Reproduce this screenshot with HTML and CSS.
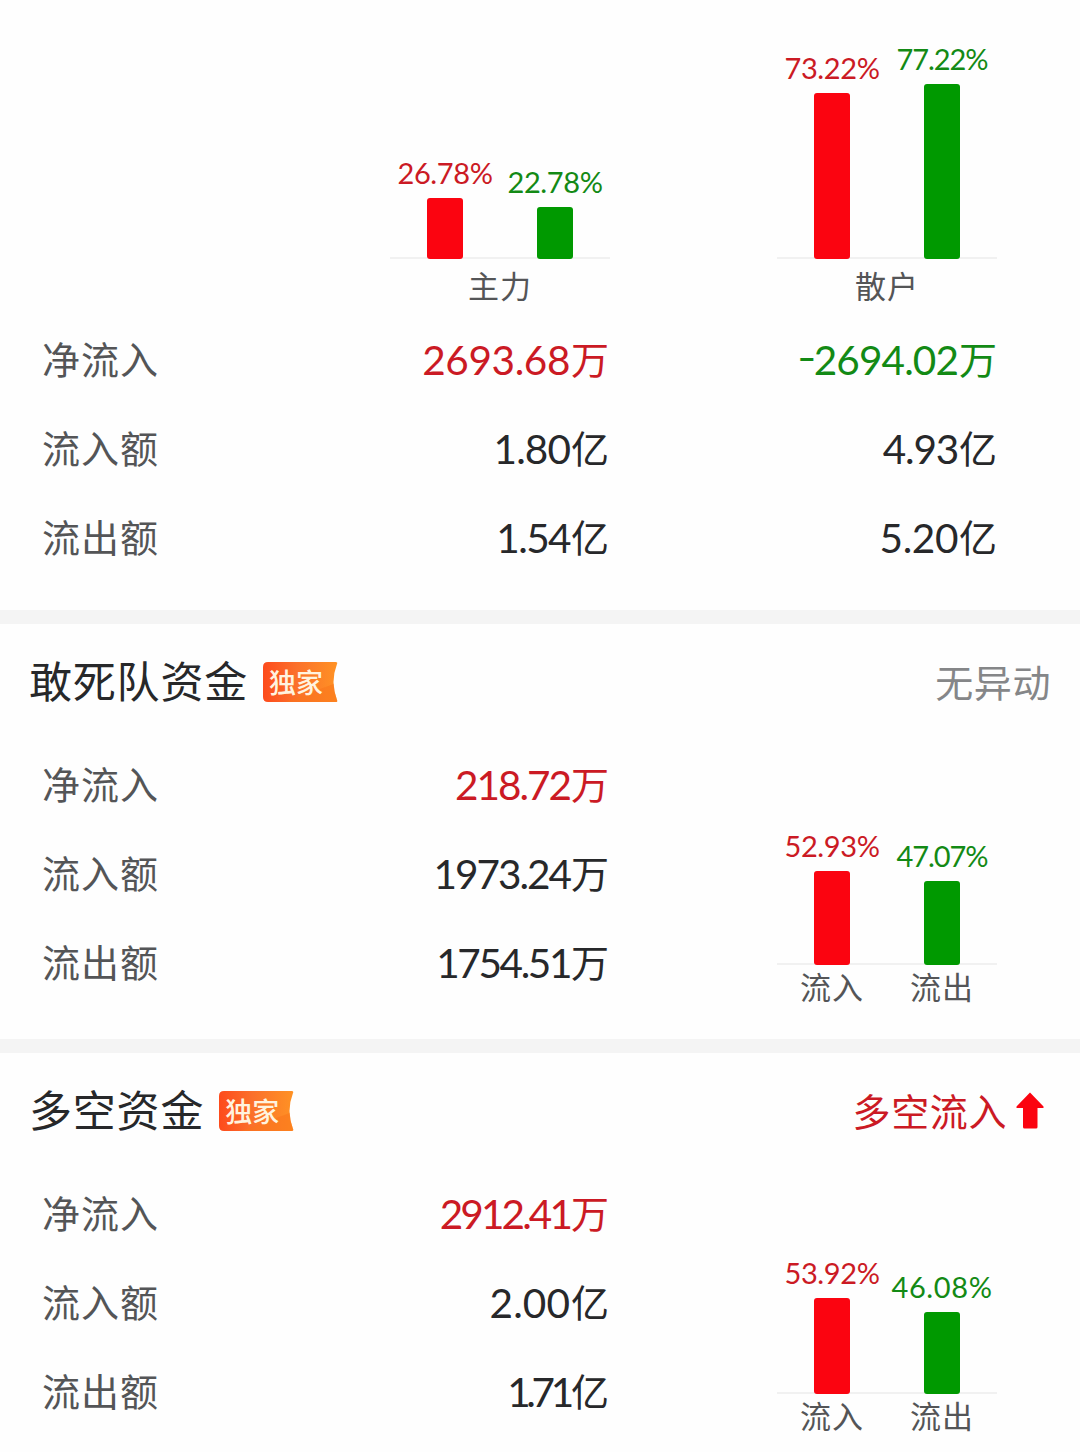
FILE: index.html
```html
<!DOCTYPE html>
<html lang="zh-CN">
<head>
<meta charset="utf-8">
<title>资金流向</title>
<link rel="stylesheet" href="styles.css">
</head>
<body>
<main class="page">
  <section class="overview">
    <div class="overview-charts">
      <div class="chart">
        <div class="bars">
          <div class="col"><span class="pct up">26.78%</span><i class="bar in" style="height:61px"></i></div>
          <div class="col"><span class="pct down">22.78%</span><i class="bar out" style="height:52px"></i></div>
        </div>
        <div class="captions"><span>主力</span></div>
      </div>
      <div class="chart">
        <div class="bars">
          <div class="col"><span class="pct up">73.22%</span><i class="bar in" style="height:166px"></i></div>
          <div class="col"><span class="pct down narrow">77.22%</span><i class="bar out" style="height:175px"></i></div>
        </div>
        <div class="captions"><span>散户</span></div>
      </div>
    </div>
    <div class="row"><span class="label">净流入</span><span class="value up"><b class="t1">2693.68</b>万</span><span class="value down"><b class="t2"><em>-</em>2694.02</b>万</span></div>
    <div class="row"><span class="label">流入额</span><span class="value"><b class="t2">1.80</b>亿</span><span class="value"><b class="t3">4.93</b>亿</span></div>
    <div class="row"><span class="label">流出额</span><span class="value"><b class="t4">1.54</b>亿</span><span class="value"><b class="t1">5.20</b>亿</span></div>
  </section>

  <section class="panel">
    <header class="head">
      <h2>敢死队资金</h2>
      <span class="tag"><svg class="tag-bg" viewBox="0 0 75 40"><defs><linearGradient id="g1"><stop offset="0" stop-color="#fd4b1c"/><stop offset=".45" stop-color="#fb702b"/><stop offset="1" stop-color="#ff9224"/></linearGradient></defs><path d="M5 0H72.500Q75 0 74 2Q67 20 74 38Q75 40 72.500 40H5Q0 40 0 35V5Q0 0 5 0Z" fill="url(#g1)"/><path d="M22 40L70.600 22Q71.500 31 74 38Q75 40 72.500 40Z" fill="#f9751c" opacity=".55"/></svg><span>独家</span></span>
      <span class="status">无异动</span>
    </header>
    <div class="body">
      <div class="rows">
        <div class="row"><span class="label">净流入</span><span class="value up"><b class="t5">218.72</b>万</span></div>
        <div class="row"><span class="label">流入额</span><span class="value"><b class="t5">1973.24</b>万</span></div>
        <div class="row"><span class="label">流出额</span><span class="value"><b class="t6">1754.51</b>万</span></div>
      </div>
      <div class="chart">
        <div class="bars">
          <div class="col"><span class="pct up">52.93%</span><i class="bar in" style="height:94px"></i></div>
          <div class="col"><span class="pct down narrow">47.07%</span><i class="bar out" style="height:84px"></i></div>
        </div>
        <div class="captions"><span>流入</span><span>流出</span></div>
      </div>
    </div>
  </section>

  <section class="panel">
    <header class="head">
      <h2>多空资金</h2>
      <span class="tag"><svg class="tag-bg" viewBox="0 0 75 40"><path d="M5 0H72.500Q75 0 74 2Q67 20 74 38Q75 40 72.500 40H5Q0 40 0 35V5Q0 0 5 0Z" fill="url(#g1)"/><path d="M22 40L70.600 22Q71.500 31 74 38Q75 40 72.500 40Z" fill="#f9751c" opacity=".55"/></svg><span>独家</span></span>
      <span class="status up">多空流入<svg class="arrow" viewBox="0 0 28 37"><path d="M14 .5L27.500 14.500V16H21.500V35Q21.500 36.500 20 36.500H8.500Q7 36.500 7 35V16H.5V14.500Z" fill="#fb0410"/></svg></span>
    </header>
    <div class="body">
      <div class="rows">
        <div class="row"><span class="label">净流入</span><span class="value up"><b class="t7">2912.41</b>万</span></div>
        <div class="row"><span class="label">流入额</span><span class="value"><b class="t0">2.00</b>亿</span></div>
        <div class="row"><span class="label">流出额</span><span class="value"><b class="t8">1.71</b>亿</span></div>
      </div>
      <div class="chart">
        <div class="bars">
          <div class="col"><span class="pct up">53.92%</span><i class="bar in" style="height:96px"></i></div>
          <div class="col"><span class="pct down wide">46.08%</span><i class="bar out" style="height:82px"></i></div>
        </div>
        <div class="captions"><span>流入</span><span>流出</span></div>
      </div>
    </div>
  </section>
</main>
</body>
</html>
```
FILE: styles.css
```css
* { box-sizing: border-box; }
body {
  margin: 0;
  background: #fefefe;
  color: #27282a;
  font-family: Lato, "Noto Sans CJK SC", sans-serif;
}
.page { width: 1080px; height: 1452px; overflow: hidden; }
.overview { height: 610px; }
.overview-charts {
  display: flex;
  gap: 167px;
  padding-left: 390px;
  height: 314px;
  align-items: flex-end;
}
.overview-charts .chart { margin-bottom: 9px; }

.chart { width: 220px; flex: none; }
.bars {
  display: flex;
  align-items: flex-end;
  background: linear-gradient(#f1f1f1, #f1f1f1) 0 100% / 100% 2px no-repeat;
}
.col { width: 110px; display: flex; flex-direction: column; align-items: center; }
.pct {
  font-size: 29px;
  line-height: 30px;
  margin-bottom: 10px;
  letter-spacing: -.4px;
  white-space: nowrap;
}
.pct.narrow { letter-spacing: -1.100px; }
.pct.wide { letter-spacing: .6px; }
.bar { width: 36px; border-radius: 3px; }
.in { background: #fb0410; }
.out { background: #009900; }
.captions {
  display: flex;
  justify-content: space-around;
  height: 46px;
  line-height: 54px;
  font-size: 31px;
  letter-spacing: 1px;
  color: #545557;
}
.body .captions { line-height: 45px; }
.captions span { width: 110px; text-align: center; }

.row {
  display: grid;
  grid-template-columns: 200px 366px 388px;
  align-items: center;
  padding-left: 42px;
  height: 89px;
}
.label { font-size: 38px; letter-spacing: 1px; color: #545557; padding-bottom: 3px; }
.value { font-size: 38px; text-align: right; white-space: nowrap; margin-right: -1px; padding-bottom: 3px; }
.value b {
  font-size: 40.500px;
  font-weight: 400;
  vertical-align: -1px;
  letter-spacing: var(--track, 0px);
  margin-right: 1px;
}
.value em { display: inline-block; font-style: normal; transform: translate(-1px, -3px) scaleX(1.3); }
.t0 { --track: .1px; }
.t1 { --track: -.4px; }
.t2 { --track: -.9px; }
.t3 { --track: -1.200px; }
.t4 { --track: -1.600px; }
.t5 { --track: -2px; }
.t6 { --track: -2.400px; }
.t7 { --track: -2.900px; }
.t8 { --track: -4.300px; }
.up { color: #cb1a24; }
.down { color: #138a15; }

.panel { height: 429px; border-top: 14px solid #f4f4f4; }
.head {
  display: flex;
  align-items: center;
  height: 115px;
  padding: 0 29px;
}
h2 { margin: 0; font-size: 43px; font-weight: 400; letter-spacing: .8px; line-height: 60px; }
.tag {
  position: relative;
  width: 75px;
  height: 40px;
  margin-left: 15px;
  padding-left: 6px;
  font-size: 27px;
  line-height: 42px;
  font-weight: 500;
  color: #fff3df;
}
.tag span { position: relative; }
.tag-bg { position: absolute; left: 0; top: 0; width: 75px; height: 40px; }
.status { display: flex; align-items: center; margin-left: auto; padding-bottom: 3px; font-size: 38px; letter-spacing: .6px; color: #858688; }
.status.up { color: #cb1a24; }
.arrow { width: 28px; height: 37px; margin: 2px 7px 0 9px; }
.body { display: flex; }
.rows { width: 777px; }
.rows .row { grid-template-columns: 200px 366px; }
.body .chart { display: flex; flex-direction: column; justify-content: flex-end; height: 272px; }
```
